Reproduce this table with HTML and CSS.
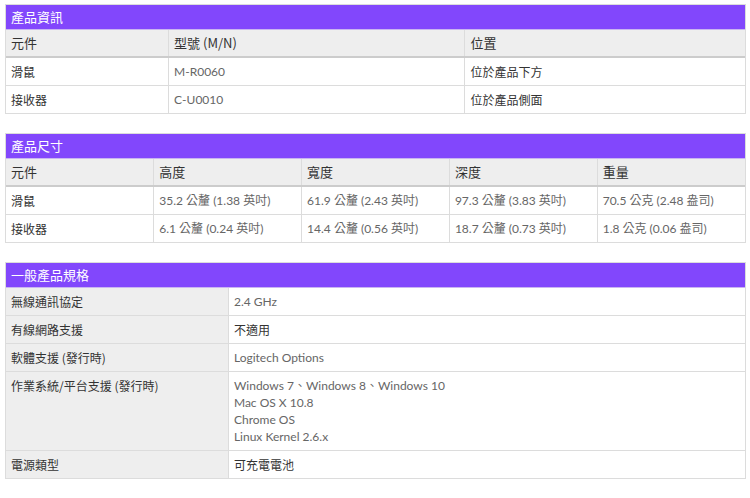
FILE: index.html
```html
<!DOCTYPE html>
<html lang="zh-Hant">
<head>
<meta charset="utf-8">
<title>產品規格</title>
<link rel="stylesheet" href="styles.css">
</head>
<body>
<section class="spec">
  <h2 class="spec-title">產品資訊</h2>
  <table class="grid info">
    <colgroup><col class="c22"><col class="c40"><col></colgroup>
    <thead><tr><th>元件</th><th>型號 (M/N)</th><th>位置</th></tr></thead>
    <tbody>
      <tr><td>滑鼠</td><td class="val">M-R0060</td><td>位於產品下方</td></tr>
      <tr><td>接收器</td><td class="val">C-U0010</td><td>位於產品側面</td></tr>
    </tbody>
  </table>
</section>

<section class="spec">
  <h2 class="spec-title">產品尺寸</h2>
  <table class="grid">
    <thead><tr><th>元件</th><th>高度</th><th>寬度</th><th>深度</th><th>重量</th></tr></thead>
    <tbody>
      <tr><td>滑鼠</td><td class="val">35.2 公釐 (1.38 英吋)</td><td class="val">61.9 公釐 (2.43 英吋)</td><td class="val">97.3 公釐 (3.83 英吋)</td><td class="val">70.5 公克 (2.48 盎司)</td></tr>
      <tr><td>接收器</td><td class="val">6.1 公釐 (0.24 英吋)</td><td class="val">14.4 公釐 (0.56 英吋)</td><td class="val">18.7 公釐 (0.73 英吋)</td><td class="val">1.8 公克 (0.06 盎司)</td></tr>
    </tbody>
  </table>
</section>

<section class="spec">
  <h2 class="spec-title">一般產品規格</h2>
  <table class="grid general">
    <colgroup><col class="c30"><col></colgroup>
    <tbody>
      <tr><th scope="row">無線通訊協定</th><td class="val">2.4 GHz</td></tr>
      <tr><th scope="row">有線網路支援</th><td>不適用</td></tr>
      <tr><th scope="row">軟體支援 (發行時)</th><td class="val">Logitech Options</td></tr>
      <tr><th scope="row">作業系統/平台支援 (發行時)</th><td class="val multi">Windows 7、Windows 8、Windows 10<br>Mac OS X 10.8<br>Chrome OS<br>Linux Kernel 2.6.x</td></tr>
      <tr><th scope="row">電源類型</th><td>可充電電池</td></tr>
    </tbody>
  </table>
</section>
</body>
</html>
```

FILE: styles.css
```css
html, body {
  margin: 0;
  background: #ffffff;
}

body {
  padding: 4px 0 0 5px;
  font-family: "Noto Sans CJK TC", sans-serif;
  color: #333333;
}

.spec {
  width: 741px;
  border: 1px solid #dcdcdc;
  margin-bottom: 19px;
  box-sizing: border-box;
}

.spec-title {
  margin: 0;
  height: 24px;
  line-height: 24px;
  padding: 0 5px;
  background: #8247fc;
  color: #ffffff;
  font-size: 13px;
  font-weight: normal;
  border-bottom: 1px solid #c9b5f1;
}

.grid {
  width: 100%;
  border-collapse: collapse;
  table-layout: fixed;
}

.c22 { width: 22%; }
.c40 { width: 40.1%; }
.c30 { width: 30.1%; }

.grid th,
.grid td {
  text-align: left;
  vertical-align: top;
  font-size: 12px;
  line-height: 17px;
  padding: 5px 5px;
  border-left: 1px solid #dcdcdc;
}

.grid th:first-child,
.grid td:first-child {
  border-left: none;
}

.grid thead th {
  background: #eeeeee;
  font-weight: normal;
  font-size: 13px;
  line-height: 18px;
  padding: 4px 5px;
  border-bottom: 2px solid #cccccc;
}

.grid tbody tr + tr td,
.grid tbody tr + tr th {
  border-top: 1px solid #dcdcdc;
}

.general th {
  background: #eeeeee;
  font-weight: normal;
  border-right: 1px solid #dcdcdc;
}

.val {
  font-family: Lato, "Noto Sans CJK TC", sans-serif;
  font-size: 11px;
  color: #666666;
  padding-left: 6px;
}

.multi {
  padding-top: 6px;
  padding-bottom: 7px;
}
```
